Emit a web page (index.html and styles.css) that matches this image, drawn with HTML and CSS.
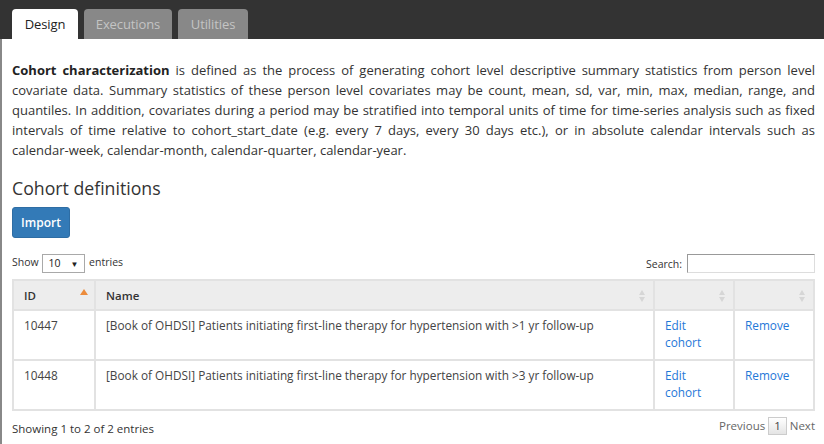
FILE: index.html
```html
<!DOCTYPE html>
<html>
<head>
<meta charset="utf-8">
<link rel="stylesheet" href="styles.css">
</head>
<body>
<div class="topbar">
  <div class="tab active t-design">Design</div>
  <div class="tab t-exec">Executions</div>
  <div class="tab t-util">Utilities</div>
</div>
<div class="content">
  <p class="intro"><b>Cohort characterization</b> is defined as the process of generating cohort level descriptive summary statistics from person level covariate data. Summary statistics of these person level covariates may be count, mean, sd, var, min, max, median, range, and quantiles. In addition, covariates during a period may be stratified into temporal units of time for time-series analysis such as fixed intervals of time relative to cohort_start_date (e.g. every 7 days, every 30 days etc.), or in absolute calendar intervals such as calendar-week, calendar-month, calendar-quarter, calendar-year.</p>
  <h2 class="heading">Cohort definitions</h2>
  <button class="btn">Import</button>
  <div class="controls">
    <div class="length">Show <span class="select">10 <span class="caret">▼</span></span> entries</div>
    <div class="search">Search: <span class="input"></span></div>
  </div>
  <table class="grid">
    <thead>
      <tr>
        <th class="c-id">ID<span class="sort-asc"></span></th>
        <th class="c-name">Name<span class="sort"></span></th>
        <th class="c-edit"><span class="sort"></span></th>
        <th class="c-rem"><span class="sort"></span></th>
      </tr>
    </thead>
    <tbody>
      <tr>
        <td>10447</td>
        <td>[Book of OHDSI] Patients initiating first-line therapy for hypertension with &gt;1 yr follow-up</td>
        <td><a>Edit<br>cohort</a></td>
        <td><a>Remove</a></td>
      </tr>
      <tr>
        <td>10448</td>
        <td>[Book of OHDSI] Patients initiating first-line therapy for hypertension with &gt;3 yr follow-up</td>
        <td><a>Edit<br>cohort</a></td>
        <td><a>Remove</a></td>
      </tr>
    </tbody>
  </table>
  <div class="footer">
    <div class="info">Showing 1 to 2 of 2 entries</div>
    <div class="pager"><span>Previous</span><span class="page">1</span><span>Next</span></div>
  </div>
</div>
</body>
</html>
```
FILE: styles.css
```css
html, body {
  margin: 0;
  background: #fff;
  font-family: "Open Sans", "Noto Sans", sans-serif;
  color: #333;
}
.topbar {
  height: 39px;
  background: #333;
  display: flex;
  align-items: flex-end;
  gap: 6px;
  padding-left: 12px;
  box-sizing: border-box;
}
.tab {
  height: 30px;
  line-height: 30px;
  text-align: center;
  border-radius: 4px 4px 0 0;
  background: #888;
  color: #c4c4c4;
  font-size: 13px;
  letter-spacing: -0.1px;
}
.t-design { width: 66px; }
.t-exec { width: 88px; }
.t-util { width: 70px; }
.tab.active {
  background: #fff;
  color: #222;
}
.content {
  border-left: 2px solid #888;
  padding: 21px 9px 0 10px;
  min-height: 405px;
  box-sizing: border-box;
}
.intro {
  margin: 0;
  font-size: 13px;
  line-height: 20px;
  text-align: justify;
  color: #333;
}
.intro b { color: #222; }
.heading {
  margin: 16px 0 0;
  font-size: 17.7px;
  line-height: 24px;
  font-weight: 400;
  color: #333;
}
.btn {
  margin-top: 7px;
  width: 58px;
  height: 31px;
  background: #337ab7;
  border: 1px solid #2e6da4;
  border-radius: 3px;
  color: #fff;
  font-family: inherit;
  font-size: 12px;
  font-weight: 600;
  padding: 0;
  display: block;
}
.controls {
  margin-top: 16px;
  display: flex;
  justify-content: space-between;
  align-items: center;
  font-size: 10.5px;
  color: #333;
  height: 19px;
}
.select {
  display: inline-block;
  box-sizing: border-box;
  width: 43px;
  height: 19px;
  line-height: 17px;
  border: 1px solid #a9a9a9;
  padding-left: 5px;
  margin: 0 1px 0 1px;
  vertical-align: middle;
  position: relative;
  color: #222;
}
.caret {
  position: absolute;
  right: 6px;
  font-size: 8px;
  color: #222;
}
.search { display: flex; align-items: center; gap: 5px; }
.input {
  display: inline-block;
  box-sizing: border-box;
  width: 128px;
  height: 19px;
  border: 1px solid #999;
  border-right-color: #ddd;
  border-bottom-color: #ddd;
  background: #fff;
}
.grid {
  margin-top: 6px;
  width: 803px;
  border-collapse: collapse;
  font-size: 11.8px;
  color: #444;
}
.grid th, .grid td {
  border: 2px solid #e2e2e2;
  text-align: left;
  vertical-align: top;
  position: relative;
}
.grid th {
  background: #ededed;
  height: 28px;
  padding: 0 10px;
  vertical-align: middle;
  font-weight: 600;
  font-size: 11.5px;
  color: #333;
}
.grid td {
  height: 50px;
  padding: 6px 10px 0;
  line-height: 17px;
  box-sizing: border-box;
}
.c-id { width: 60px; }
.c-edit { width: 58px; }
.c-rem { width: 58px; }
.grid a { color: #1f78d8; }
.sort-asc {
  position: absolute;
  right: 6px;
  top: 8px;
  width: 0; height: 0;
  border-left: 4px solid transparent;
  border-right: 4px solid transparent;
  border-bottom: 6px solid #ec8c3c;
}
.sort {
  position: absolute;
  right: 8px;
  top: 9px;
  width: 0; height: 0;
  border-left: 3.5px solid transparent;
  border-right: 3.5px solid transparent;
  border-bottom: 5px solid #d6d6d6;
}
.sort::after {
  content: "";
  position: absolute;
  left: -3.5px;
  top: 7px;
  width: 0; height: 0;
  border-left: 3.5px solid transparent;
  border-right: 3.5px solid transparent;
  border-top: 5px solid #d6d6d6;
}
.footer {
  display: flex;
  justify-content: space-between;
  align-items: center;
  margin-top: 4px;
  width: 803px;
  font-size: 11.5px;
  color: #333;
}
.info { padding-top: 6px; }
.pager { display: flex; align-items: center; gap: 3px; color: #666; font-size: 11.5px; }
.page {
  display: inline-block;
  box-sizing: border-box;
  height: 18px;
  line-height: 16px;
  padding: 0 5px;
  border: 1px solid #ccc;
  background: linear-gradient(#fff, #e4e4e4);
  color: #444;
}
```
